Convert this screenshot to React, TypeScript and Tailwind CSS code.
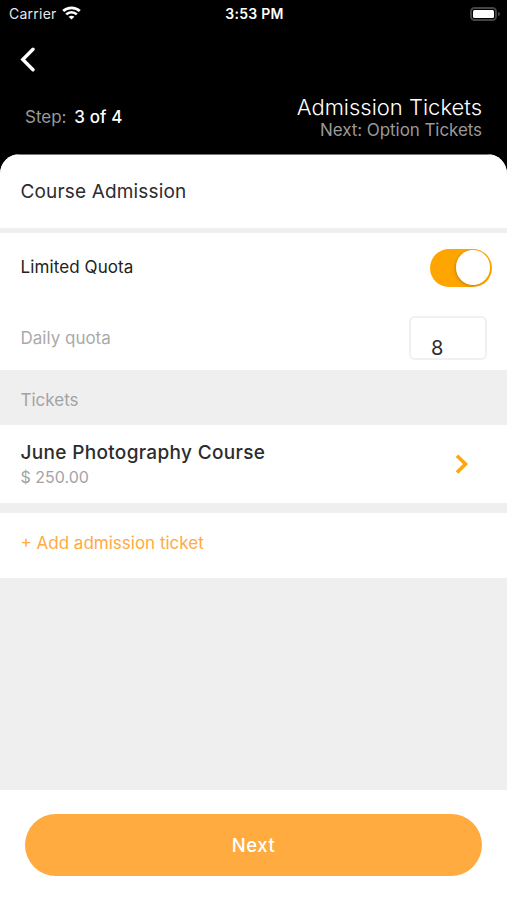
const StatusBar = () => {
  return (
    <div className="flex h-[27px] items-center justify-between pl-[9px] pr-[7px] text-[14px] text-white">
      <div className="flex w-[120px] items-center gap-[5px]">
        <span className="tracking-[0.25px] text-gray-200">Carrier</span>
        <svg className="-mt-0.5" width="19" height="14" viewBox="0 0 19 14" fill="none" stroke="currentColor" strokeWidth="2.7">
          <path d="M1.200 5C5.700 0.700 13.300 0.700 17.800 5" />
          <path d="M4.200 8.400C7.200 5.500 11.800 5.500 14.800 8.400" />
          <path d="M6.600 10.700C8.300 9.300 10.700 9.300 12.400 10.700L9.500 13.600Z" fill="currentColor" stroke="none" />
        </svg>
      </div>
      <span className="text-[14px] font-semibold tracking-[0.3px]">3:53 PM</span>
      <div className="mt-px flex w-[120px] items-center justify-end gap-px">
        <div className="h-[14px] w-[27px] rounded-[4.5px] border-2 border-[#444] p-px">
          <div className="h-full rounded-[1.5px] bg-white" />
        </div>
        <div className="h-1 w-0.5 rounded-r bg-[#444]" />
      </div>
    </div>
  );
};

const Header = () => {
  return (
    <header className="h-[154px]">
      <StatusBar />
      <button className="mt-5 ml-5 block text-white">
        <svg width="16" height="25" viewBox="0 0 16 25" fill="none" stroke="currentColor" strokeWidth="3.4" strokeLinecap="round">
          <path d="M13 2.300L2.800 12.500L13 22.700" />
        </svg>
      </button>
      <div className="mt-[22px] flex justify-between pr-[25px] pl-[25px]">
        <p className="mt-[11px] text-[17px] leading-6 text-[#999]">
          Step: <span className="ml-[3px] font-medium tracking-[0.1px] text-white">3 of 4</span>
        </p>
        <div className="text-right">
          <h1 className="text-[22px] leading-[26px] font-light text-white">Admission Tickets</h1>
          <p className="text-[17px] leading-5 tracking-[-0.07px] text-[#999]">Next: Option Tickets</p>
        </div>
      </div>
    </header>
  );
};

const App = () => {
  return (
    <div className="flex h-[900px] w-[507px] flex-col bg-black font-['Inter',sans-serif] text-[#2c2c2e]">
      <Header />
      <main className="flex flex-1 flex-col overflow-hidden rounded-t-[20px] bg-[#efefef]">
        <h2 className="h-[74px] border-t border-[#777] bg-white pt-[23px] pl-[20.5px] text-[19px] leading-7 tracking-[0.16px]">
          Course Admission
        </h2>

        <section className="mt-[5px] h-[137px] bg-white pl-[20.5px]">
          <div className="flex h-[69px] items-center justify-between pr-[15px]">
            <span className="text-[17px] tracking-[0.1px] text-[#222]">Limited Quota</span>
            <div className="flex h-[38px] w-[62px] items-center justify-end rounded-full bg-[#ffa500] p-0.5">
              <div className="size-[34.5px] rounded-full bg-white shadow-[-1px_1px_3px_rgba(0,0,0,0.2)]" />
            </div>
          </div>
          <div className="flex items-center justify-between pt-3.5 pr-5">
            <span className="mt-px text-[17px] text-[#aaa]">Daily quota</span>
            <div className="h-11 w-[78px] rounded-[6px] border-2 border-[#f0f0f0] pt-4 pl-5 text-[20px] leading-7">8</div>
          </div>
        </section>

        <h3 className="h-[55px] pt-[18px] pl-[20.5px] text-[17px] leading-6 text-[#a3a3a3]">Tickets</h3>

        <section className="flex h-[78px] items-center justify-between bg-white pr-[38px] pl-[20.5px]">
          <div>
            <p className="text-[19px] leading-[26px] font-medium tracking-[0.33px]">June Photography Course</p>
            <p className="text-[16px] leading-[22px] text-[#a3a3a3]">$ 250.00</p>
          </div>
          <svg width="14" height="21" viewBox="0 0 14 21" fill="none" stroke="#ffa60b" strokeWidth="3.6">
            <path d="M2 1.700L10.500 10L2 18.500" />
          </svg>
        </section>

        <button className="mt-[10px] h-[65px] bg-white pl-[20.5px] pb-1 text-left text-[17px] text-[#ffab40]">
          + Add admission ticket
        </button>

        <footer className="mt-auto h-[110px] bg-white px-[25px] pt-6">
          <button className="h-[61.500px] w-full rounded-full bg-[#ffab40] pt-0.5 text-[18.5px] font-medium tracking-[0.5px] text-white">
            Next
          </button>
        </footer>
      </main>
    </div>
  );
};

export default App;
